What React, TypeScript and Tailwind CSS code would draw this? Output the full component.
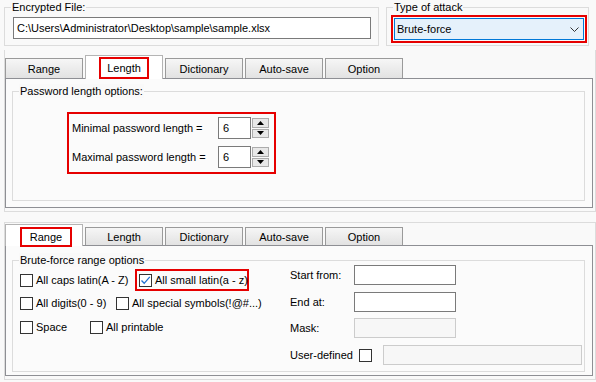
import type { ReactNode } from 'react';

const TABS = ['Range', 'Length', 'Dictionary', 'Auto-save', 'Option'];

function GroupBox({ label, className, children }: { label: string; className: string; children?: ReactNode }) {
  return (
    <div className={`relative border border-[#dcdcdc] ${className}`}>
      <span className="absolute -top-[8px] left-[6px] bg-[#f9f9f9] px-[1px] leading-[14px]">{label}</span>
      {children}
    </div>
  );
}

function TabStrip({ active, big }: { active: string; big?: boolean }) {
  return (
    <div className="flex items-end gap-[2px]">
      {TABS.map((t) =>
        t === active ? (
          <div
            key={t}
            className={`relative z-10 -mb-px flex w-[78px] justify-center border border-b-0 border-[#b4b4b4] bg-white ${
              big ? 'h-[24px] pt-[1px]' : 'h-[22px] pl-[4px] pt-[2px]'
            }`}
          >
            <span
              className={`flex items-center justify-center border-2 border-[#e60000] ${
                big ? 'h-[22px] w-[50px]' : 'h-[20px] w-[52px]'
              }`}
            >
              {t}
            </span>
          </div>
        ) : (
          <div
            key={t}
            className={`flex w-[78px] items-center justify-center border border-b-0 border-[#9a9a9a] bg-gradient-to-b from-[#f6f6f6] to-[#e2e2e2] ${
              big ? 'h-[20px]' : 'h-[18px]'
            }`}
          >
            {t}
          </div>
        ),
      )}
    </div>
  );
}

function Arrow({ up }: { up?: boolean }) {
  return (
    <svg width="7" height="4" viewBox="0 0 7 4">
      <path d={up ? 'M0 4 L3.5 0 L7 4 Z' : 'M0 0 L3.5 4 L7 0 Z'} fill="#000" />
    </svg>
  );
}

function Spin({ value }: { value: string }) {
  return (
    <div className="flex h-[22px]">
      <div className="w-[33px] border border-[#7a7a7a] bg-white pl-[4px] leading-[20px]">{value}</div>
      <div className="flex w-[18px] flex-col gap-px py-px pl-px">
        <div className="flex flex-1 items-center justify-center border border-[#acacac] bg-[#e8e8e8]">
          <Arrow up />
        </div>
        <div className="flex flex-1 items-center justify-center border border-[#acacac] bg-[#e8e8e8]">
          <Arrow />
        </div>
      </div>
    </div>
  );
}

function Check({ checked }: { checked?: boolean }) {
  return (
    <span className="flex h-[13px] w-[13px] shrink-0 items-center justify-center border border-[#333] bg-white">
      {checked && (
        <svg width="11" height="11" viewBox="0 0 11 11">
          <path d="M1.5 5.5 L4.2 8.3 L9.8 1.8" fill="none" stroke="#1f6fd0" strokeWidth="1.3" />
        </svg>
      )}
    </span>
  );
}

function CheckItem({ label, checked, className }: { label: string; checked?: boolean; className?: string }) {
  return (
    <div className={`flex shrink-0 items-center gap-[3px] ${className ?? ''}`}>
      <Check checked={checked} />
      <span>{label}</span>
    </div>
  );
}

export default function App() {
  return (
    <div className="h-[382px] w-[596px] overflow-hidden whitespace-nowrap bg-[#f9f9f9] font-['Liberation_Sans',Arial,sans-serif] text-[11px] leading-[14px] text-black">
      {/* Top window */}
      <div className="flex pt-[7px]">
        <GroupBox label="Encrypted File:" className="ml-[4px] h-[39px] w-[375px]">
          <div className="ml-[8px] mt-[9px] h-[22px] w-[358px] border border-[#7a7a7a] bg-white pl-[3px] leading-[20px]">
            C:\Users\Administrator\Desktop\sample\sample.xlsx
          </div>
        </GroupBox>
        <GroupBox label="Type of attack" className="ml-[7px] h-[39px] w-[203px]">
          <div className="ml-[4px] mt-[7px] h-[28px] w-[196px] border-2 border-[#e60000] p-px">
            <div className="flex h-full items-center justify-between border border-[#0078d7] bg-[#e5f1fb] pl-[2px] pr-[4px]">
              <span>Brute-force</span>
              <svg width="9" height="5" viewBox="0 0 9 5">
                <path d="M0.5 0.5 L4.5 4.5 L8.5 0.5" fill="none" stroke="#333" strokeWidth="1" />
              </svg>
            </div>
          </div>
        </GroupBox>
      </div>

      <div className="ml-[4px] mt-[4px] w-[592px] border-x border-b border-[#dcdcdc] pb-[3px] pt-[5px]">
        <TabStrip active="Length" big />
        <div className="h-[130px] w-[588px] border border-[#8e8f94] bg-[#fbfbfb] pl-[6px] pt-[12px]">
          <GroupBox label="Password length options:" className="h-[110px] w-[573px]">
            <div className="ml-[54px] mt-[20px] flex h-[62px] w-[209px] flex-col gap-[7px] border-2 border-[#e60000] pl-[3px] pt-[3px]">
              <div className="flex h-[22px] items-center">
                <span className="w-[146px]">Minimal password length =</span>
                <Spin value="6" />
              </div>
              <div className="flex h-[22px] items-center">
                <span className="w-[146px]">Maximal password length =</span>
                <Spin value="6" />
              </div>
            </div>
          </GroupBox>
        </div>
      </div>

      {/* Bottom window */}
      <div className="ml-[4px] mt-[10px] w-[592px] border border-[#dcdcdc] pb-[3px] pt-px">
        <TabStrip active="Range" />
        <div className="h-[131px] w-[588px] border border-[#8e8f94] bg-[#fbfbfb] pl-[6px] pt-[14px]">
          <GroupBox label="Brute-force range options" className="flex h-[112px] w-[573px]">
            <div className="flex w-[277px] flex-col pl-[7px] pt-[8px]">
              <div className="flex h-[22px] items-center">
                <CheckItem label="All caps latin(A - Z)" className="w-[115px]" />
                <div className="flex h-[22px] w-[114px] items-center border-2 border-[#e60000] pl-[2px]">
                  <CheckItem label="All small latin(a - z)" checked />
                </div>
              </div>
              <div className="mt-px flex h-[22px] items-center">
                <CheckItem label="All digits(0 - 9)" className="w-[96px]" />
                <CheckItem label="All special symbols(!@#...)" />
              </div>
              <div className="mt-[2px] flex h-[22px] items-center">
                <CheckItem label="Space" className="w-[70px]" />
                <CheckItem label="All printable" />
              </div>
            </div>
            <div className="flex flex-col pt-[4px]">
              <div className="flex h-[20px] items-center">
                <span className="w-[64px]">Start from:</span>
                <div className="h-[20px] w-[102px] border border-[#7a7a7a] bg-white" />
              </div>
              <div className="mt-[7px] flex h-[20px] items-center">
                <span className="w-[64px]">End at:</span>
                <div className="h-[20px] w-[102px] border border-[#7a7a7a] bg-white" />
              </div>
              <div className="mt-[6px] flex h-[20px] items-center">
                <span className="w-[64px]">Mask:</span>
                <div className="h-[20px] w-[102px] border border-[#cccccc] bg-[#f7f7f7]" />
              </div>
              <div className="mt-[7px] flex h-[20px] items-center">
                <span className="w-[69px]">User-defined</span>
                <Check />
                <div className="ml-[11px] h-[20px] w-[199px] border border-[#cccccc] bg-[#f7f7f7]" />
              </div>
            </div>
          </GroupBox>
        </div>
      </div>
    </div>
  );
}
